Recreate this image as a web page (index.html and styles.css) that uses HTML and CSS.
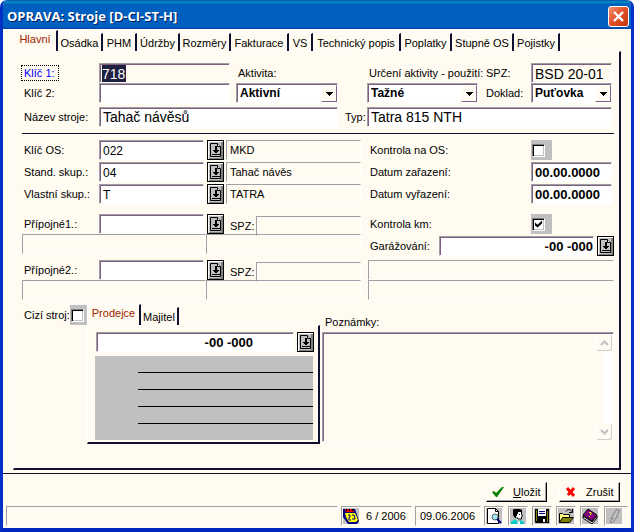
FILE: index.html
```html
<!DOCTYPE html>
<html lang="cs">
<head>
<meta charset="utf-8">
<title>OPRAVA: Stroje</title>
<link rel="stylesheet" href="styles.css">
</head>
<body>
<svg class="sprite" aria-hidden="true">
  <symbol id="pick" viewBox="0 0 13 16">
    <path d="M1.500 1.500H8.500L11.500 4.500V14.500H1.500Z" fill="#c0c0c0" stroke="#000"/>
    <path d="M8.500 1.500V4.500H11.500" fill="#fff" stroke="#000"/>
    <path d="M6 4h2v4h2v1H9v1H8v1H6v-1H5V9H4V8h2zM3 12h8v1H3z" fill="#000"/>
  </symbol>
  <symbol id="down" viewBox="0 0 7 4"><path d="M0 0h7v1H6v1H5v1H4v1H3V3H2V2H1V1H0z"/></symbol>
</svg>
<main class="window">
  <header class="titlebar">
    <h1>OPRAVA: Stroje [D-CI-ST-H]</h1>
    <button class="close" aria-label="Zavřít"><svg viewBox="0 0 19 19" width="19" height="19"><path d="M5 5l9 9M14 5l-9 9" stroke="#fff" stroke-width="2.400"/></svg></button>
  </header>
  <form class="body">
    <nav class="tabs">
      <button type="button" class="tab active">Hlavní</button>
      <button type="button" class="tab">Osádka</button>
      <button type="button" class="tab">PHM</button>
      <button type="button" class="tab">Údržby</button>
      <button type="button" class="tab">Rozměry</button>
      <button type="button" class="tab">Fakturace</button>
      <button type="button" class="tab">VS</button>
      <button type="button" class="tab">Technický popis</button>
      <button type="button" class="tab">Poplatky</button>
      <button type="button" class="tab">Stupně OS</button>
      <button type="button" class="tab">Pojistky</button>
    </nav>
    <section class="panel">
      <div class="identity">
        <label class="focused" for="key1">Klíč 1:</label>
        <div class="field muted selected"><input id="key1" value="718"></div>
        <label class="c4" for="activity">Aktivita:</label>
        <label class="c6" for="usage">Určení aktivity - použití:</label>
        <label class="c7" for="plate">SPZ:</label>
        <input id="plate" class="field muted large" value="BSD 20-01">

        <label for="key2">Klíč 2:</label>
        <input id="key2" class="field">
        <div class="select c4"><select id="activity"><option>Aktivní</option></select><span><svg width="7" height="4"><use href="#down"/></svg></span></div>
        <div class="select c6"><select id="usage"><option>Tažné</option></select><span><svg width="7" height="4"><use href="#down"/></svg></span></div>
        <label class="c7" for="doc">Doklad:</label>
        <div class="select"><select id="doc"><option>Puťovka</option></select><span><svg width="7" height="4"><use href="#down"/></svg></span></div>

        <label for="name">Název stroje:</label>
        <input id="name" class="field large span-name" value="Tahač návěsů">
        <label class="type" for="type">Typ:</label>
        <input id="type" class="field large span-type" value="Tatra 815 NTH">
      </div>

      <div class="details">
        <div class="stack">
          <div class="row"><label for="os">Klíč OS:</label><input id="os" class="field" value="022"><button type="button" class="pick" aria-label="Vybrat"><svg width="13" height="16"><use href="#pick"/></svg></button><output class="info">MKD</output></div>
          <div class="row"><label for="std">Stand. skup.:</label><input id="std" class="field" value="04"><button type="button" class="pick" aria-label="Vybrat"><svg width="13" height="16"><use href="#pick"/></svg></button><output class="info">Tahač návěs</output></div>
          <div class="row"><label for="own">Vlastní skup.:</label><input id="own" class="field" value="T"><button type="button" class="pick" aria-label="Vybrat"><svg width="13" height="16"><use href="#pick"/></svg></button><output class="info">TATRA</output></div>
          <div class="trailer">
            <div class="row"><label for="tr1">Přípojné1.:</label><input id="tr1" class="field"><button type="button" class="pick" aria-label="Vybrat"><svg width="13" height="16"><use href="#pick"/></svg></button><span class="plate">SPZ:</span><output class="info low"></output></div>
            <div class="pair"><output class="info"></output><output class="info"></output></div>
          </div>
          <div class="trailer second">
            <div class="row"><label for="tr2">Přípojné2.:</label><input id="tr2" class="field"><button type="button" class="pick" aria-label="Vybrat"><svg width="13" height="16"><use href="#pick"/></svg></button><span class="plate">SPZ:</span><output class="info low"></output></div>
            <div class="pair"><output class="info"></output><output class="info"></output></div>
          </div>
        </div>
        <div class="stack">
          <div class="row right"><label for="cos">Kontrola na OS:</label><span class="tick"><input type="checkbox" id="cos"></span></div>
          <div class="row right"><label for="d1">Datum zařazení:</label><input id="d1" class="field bold" value="00.00.0000"></div>
          <div class="row right"><label for="d2">Datum vyřazení:</label><input id="d2" class="field bold" value="00.00.0000"></div>
          <div class="row right km"><label for="km">Kontrola km:</label><span class="tick"><input type="checkbox" id="km" checked></span></div>
          <div class="row garage"><label for="gar">Garážování:</label><input id="gar" class="field bold end" value="-00 -000"><button type="button" class="pick" aria-label="Vybrat"><svg width="13" height="16"><use href="#pick"/></svg></button></div>
          <div class="boxes"><output class="info"></output><output class="info"></output></div>
        </div>
      </div>

      <div class="lower">
        <div class="foreign"><label for="foreign">Cizí stroj:</label><span class="tick"><input type="checkbox" id="foreign"></span></div>
        <div class="owner">
          <nav class="tabs small">
            <button type="button" class="tab active">Prodejce</button>
            <button type="button" class="tab">Majitel</button>
          </nav>
          <div class="panel inner">
            <div class="row seller"><input class="field bold" value="-00 -000" aria-label="Prodejce"><button type="button" class="pick" aria-label="Vybrat"><svg width="13" height="16"><use href="#pick"/></svg></button></div>
            <div class="lines"><i></i><i></i><i></i><i></i></div>
          </div>
        </div>
        <div class="notes">
          <label for="notes">Poznámky:</label>
          <div class="memo">
            <textarea id="notes"></textarea>
            <div class="scroll">
              <span><svg width="9" height="6" viewBox="0 0 9 6"><path d="M1 5l3.500-3.500L8 5" fill="none" stroke="#c0c0c0" stroke-width="2"/></svg></span>
              <span><svg width="9" height="6" viewBox="0 0 9 6"><path d="M1 1l3.500 3.500L8 1" fill="none" stroke="#c0c0c0" stroke-width="2"/></svg></span>
            </div>
          </div>
        </div>
      </div>
    </section>
  </form>
  <footer>
    <div class="actions">
      <button class="action"><svg width="12" height="12" viewBox="0 0 12 12"><path d="M0 6l2-1 2 2 6-6 2 0-7 10H4z" fill="#008000"/></svg><span><u>U</u>ložit</span></button>
      <button class="action"><svg width="12" height="12" viewBox="0 0 12 12"><path d="M2 2l7 8M9 2L3 9" fill="none" stroke="#f00" stroke-width="3"/></svg><span>Zrušit</span></button>
    </div>
    <div class="status">
      <span class="info message"></span>
      <span class="info period"><svg class="icon" width="16" height="16" viewBox="0 0 16 16"><path d="M0 1h12l4 12-2 3H5L0 9z" fill="#000080"/><path d="M2 1h8l1 3H3z" fill="#e00000"/><path d="M3 1h1v2H3zM6 1h1v2H6zM9 1h1v2H9z"/><path d="M2 5h10l3 7-2 2H6L3 9z" fill="#ff0"/><path d="M5 7h2v2H6v3h2M9 7h2l1 4H9" fill="none" stroke="#000080"/></svg>6 / 2006</span>
      <span class="info date">09.06.2006</span>
      <button class="tool" aria-label="Náhled"><svg class="icon" width="16" height="16" viewBox="0 0 16 16"><path d="M1.500.500h8l3 3v12h-11z" fill="#fff" stroke="#000"/><path d="M9.500.500v3h3" fill="none" stroke="#000"/><circle cx="9" cy="9" r="3" fill="#a0e8f0" stroke="#606060"/><path d="M11 11l4 4" stroke="#000080" stroke-width="2"/></svg></button>
      <button class="tool" aria-label="Uživatel"><svg class="icon" width="16" height="16" viewBox="0 0 16 16"><path d="M6 4h5l1 3-1 4-3 1-2-2z" fill="#fff"/><path d="M4 1h6l2 1v2H8v2H7v2H6v2H5L3 7V2z"/><path d="M11.500 4v2l1 2-1 1v2H8L6.500 9" fill="none" stroke="#000"/><path d="M9 6h1v1H9z"/><path d="M1 16v-2l4-3 3 3 2-2 4 2v2z" fill="#0cc"/><path d="M7 13l1 1 2-1v3H8z" fill="#fff"/></svg></button>
      <button class="tool" aria-label="Uložit"><svg class="icon" width="16" height="16" viewBox="0 0 16 16"><path d="M1 1h14v14H2L1 14z"/><path d="M2 2h1v11H2zM13 3h1v11h-1z" fill="#808000"/><path d="M4 1h8v7H4z" fill="#fff"/><path d="M5 3.500h6M5 5.500h6" stroke="#000080"/><path d="M9 11h2v3H9z" fill="#fff"/></svg></button>
      <button class="tool" aria-label="Otevřít"><svg class="icon" width="16" height="16" viewBox="0 0 16 16"><path d="M1.500 14.500v-9h3l1 1h6v3" fill="#ff8" stroke="#000"/><path d="M1.500 14.500l3-5h11l-4 5z" fill="#808000" stroke="#000"/><path d="M8 3.500c2-3 4-2 6 0M14.500 1v3.500H11" fill="none" stroke="#000"/></svg></button>
      <button class="tool" aria-label="Nápověda"><svg class="icon" width="16" height="16" viewBox="0 0 16 16"><path d="M1 8l9 6 5-6v2l-5 6-9-6z" fill="#fff" stroke="#000"/><path d="M6 1l9 6-5 6-9-6z" fill="#800080" stroke="#000"/><path d="M7 4.500h2v2H8M7 8.500h1" stroke="#ff0" fill="none"/></svg></button>
      <button class="tool last" aria-label="Upravit"><svg class="icon" width="16" height="16" viewBox="0 0 16 16"><path d="M4.500 14.500l1-5 5-8 3 1-4 9-3 3zM5 10l3 1" fill="none" stroke="#808080"/></svg></button>
    </div>
  </footer>
</main>
</body>
</html>
```
FILE: styles.css
```css
* { box-sizing: border-box; }

:root {
  --bg: #fffbf0;
  --gray: #c0c0c0;
  --edge: #a0a0a4;
  --shade: #806080;
  --ink: #101030;
}

body {
  margin: 0;
  background: #fff;
  color: #000;
  font: 11px/14px "Liberation Sans", Arial, sans-serif;
}

button, input, select, textarea {
  margin: 0;
  border: 0;
  padding: 0;
  border-radius: 0;
  background: none;
  color: inherit;
  font: inherit;
  outline: 0;
}

svg { display: block; }
.sprite { position: absolute; width: 0; height: 0; }

.window {
  display: flex;
  flex-direction: column;
  min-height: 100vh;
  border: solid #0032c8;
  border-width: 0 3px 4px;
  border-bottom-color: #0028c0;
  border-radius: 7px 7px 0 0;
  background: var(--bg);
  overflow: hidden;
}

.titlebar {
  display: flex;
  align-items: center;
  justify-content: space-between;
  height: 29px;
  margin: 0 -3px;
  padding: 3px 5px 0 7px;
  background: linear-gradient(#0850b8, #0090c0 2px, #0060c0 4px, #0060c0 26px, #0048b0);
}

h1 {
  margin: 0;
  color: #fff;
  font: bold 13px/18px "Open Sans", sans-serif;
  text-shadow: 1px 1px #002060;
}

.close {
  width: 21px;
  height: 21px;
  border: 1px solid #fff;
  border-radius: 3px;
  background: linear-gradient(135deg, #f09070, #e05028 50%, #c03808);
}

.body { flex: 1; padding: 1px 10px 0; }

.tabs { display: grid; grid-template-columns: 45px 45px 34px 43px 51px 58px 24px 88px 51px 62px 46px; align-items: end; }
.tabs.small { grid-template-columns: 54px 38px; }

.tab {
  height: 18px;
  margin-top: 3px;
  border-top: 1px solid #fff;
  border-right: 2px solid var(--ink);
  white-space: nowrap;
}

.tab.active {
  height: 21px;
  margin-top: 0;
  padding-bottom: 4px;
  border-left: 1px solid #fff;
  color: #a02000;
}

.panel {
  border: solid var(--ink);
  border-width: 1px 2px 2px 1px;
  border-top-color: #fff;
  border-left-color: #fff;
}

.body > .panel { padding: 11px 5px 24px 8px; }

.field {
  display: block;
  width: 100%;
  min-width: 0;
  height: 20px;
  padding: 1px 3px 0;
  border: 1px solid #fff;
  border-top-color: var(--edge);
  border-left-color: var(--edge);
  background: #fff;
  box-shadow: inset 1px 1px var(--shade);
  font-size: 12px;
}

.muted { background: var(--bg); }
.large { font-size: 14px; }
.bold { font-size: 13px; font-weight: bold; }
.end { padding-right: 0; text-align: right; }

.identity {
  display: grid;
  grid-template-columns: 77px 131px 6px 102px 29px 111px 53px 1fr;
  grid-template-rows: 20px 20px 27px;
  align-items: center;
  padding: 0 2px 3px 0;
  border-bottom: 1px solid var(--ink);
}

.identity label, .row > label { padding-left: 2px; white-space: nowrap; }
.identity .focused { justify-self: start; padding: 0 3px 0 2px; outline: 1px dotted #000; color: #00f; }
.c4 { grid-column: 4; }
.c6 { grid-column: 6; }
.identity .c7 { padding-left: 8px; }
.span-name { grid-column: 2 / 5; }
.span-type { grid-column: 6 / 9; }
.identity .type { padding-left: 7px; }

.selected { padding: 1px 2px 0; }
.selected input { display: block; width: 24px; height: 17px; background: #202040; color: #fff; font-size: 14px; }

.select {
  display: grid;
  height: 20px;
  border: 1px solid #fff;
  border-top-color: var(--edge);
  border-left-color: var(--edge);
  background: #fff;
  box-shadow: inset 1px 1px var(--shade);
}
.select > * { grid-area: 1 / 1; }
.select select { width: 100%; padding-left: 3px; appearance: none; font-size: 12px; font-weight: bold; }
.select span {
  display: grid;
  place-items: center;
  justify-self: end;
  width: 16px;
  margin: 1px 0 0;
  border: 1px solid #fff;
  border-right-color: var(--shade);
  border-bottom-color: var(--shade);
  background: var(--bg);
  pointer-events: none;
}

.details { display: grid; grid-template-columns: 339px 1fr; gap: 7px; padding-top: 6px; }
.stack { display: flex; flex-direction: column; gap: 2px; }
.row { display: grid; grid-template-columns: 77px 105px 22px 1fr; align-items: center; height: 20px; }
.row > .pick { margin-left: 3px; }

.pick {
  display: grid;
  place-items: center;
  width: 17px;
  height: 20px;
  border: 1px solid #000;
  background: var(--gray);
  box-shadow: inset 1px 1px #fff, inset -2px -1px #808080;
}

.info {
  display: block;
  min-width: 0;
  height: 20px;
  padding: 2px 3px;
  border: 1px solid #fff;
  border-top-color: var(--edge);
  border-left-color: var(--edge);
}

.trailer { padding-top: 6px; }
.trailer.second { padding-top: 2px; }
.trailer .row { grid-template-columns: 77px 105px 26px 26px 1fr; }
.low, .plate { margin-top: 4px; }
.pair { display: grid; grid-template-columns: 184px 1fr; margin-top: 2px; }

.right { grid-template-columns: 1fr 83px; }
.right .field { width: 81px; }
.km { margin-top: 8px; }
.garage { grid-template-columns: 71px 1fr 20px; }
.boxes { margin-top: 2px; }

.tick { display: flex; align-items: center; width: 21px; height: 20px; padding-left: 1px; background: var(--gray); }
.tick input {
  appearance: none;
  width: 13px;
  height: 13px;
  border: 1px solid #fff;
  border-top-color: #808080;
  border-left-color: #808080;
  background: #fff;
  box-shadow: inset 1px 1px #000, inset -1px -1px var(--gray);
}
.tick input:checked::before {
  content: "";
  display: block;
  width: 7px;
  height: 7px;
  margin: 2px;
  background: #000;
  clip-path: polygon(0 28%, 36% 60%, 100% 0, 100% 42%, 36% 100%, 0 71%);
}

.lower { display: grid; grid-template-columns: 65px 233px 1fr; padding-top: 4px; }
.foreign { display: flex; align-items: center; height: 22px; padding-left: 2px; white-space: nowrap; }
.foreign .tick { flex: 1; }
.inner { padding: 6px 5px 2px 7px; }
.seller { grid-template-columns: 198px 20px; padding-left: 1px; }
.seller .field { padding-right: 40px; text-align: right; }
.lines { display: flex; flex-direction: column; gap: 16px; height: 84px; margin-top: 4px; padding: 16px 0 0 43px; background: var(--gray); }
.lines i { height: 1px; background: #000; }

.notes { display: flex; flex-direction: column; padding: 11px 0 2px 2px; }
.notes label { padding-left: 3px; }
.memo {
  display: flex;
  flex: 1;
  margin-top: 3px;
  padding: 1px;
  border: 1px solid #fff;
  border-top-color: var(--edge);
  border-left-color: var(--edge);
  box-shadow: inset 1px 1px var(--shade);
}
.memo textarea { flex: 1; min-width: 0; resize: none; }
.scroll { display: flex; flex-direction: column; justify-content: space-between; width: 16px; background: linear-gradient(90deg, var(--bg) 50%, #fff 50%); }
.scroll span { display: grid; place-items: center; height: 17px; border: 1px solid #fff; border-right-color: #c8d0c8; border-bottom-color: #c8d0c8; border-radius: 3px; background: var(--bg); }

footer { margin-top: 2px; padding: 8px 3px 2px; border-top: 1px solid var(--ink); }
.actions { display: flex; justify-content: flex-end; gap: 12px; padding-right: 8px; }
.action {
  display: flex;
  align-items: center;
  gap: 9px;
  width: 61px;
  height: 20px;
  padding-left: 5px;
  border: 1px solid #fff;
  border-right-color: #000;
  border-bottom-color: #000;
  box-shadow: inset -1px -1px var(--edge);
}
.status { display: grid; grid-template-columns: 1fr 74px 69px repeat(5, 24px) 24px; margin-top: 4px; }
.status .info { margin-right: 3px; }
.status .period { display: flex; align-items: center; gap: 7px; padding: 0 1px; white-space: nowrap; }
.status .date { padding: 2px 4px; white-space: nowrap; }
.tool { height: 20px; margin-right: 4px; padding: 1px; border: 1px solid #fff; border-top-color: var(--edge); border-left-color: var(--edge); }
.tool.last { margin-right: 0; }
.icon { flex: none; background: var(--gray); }
```
